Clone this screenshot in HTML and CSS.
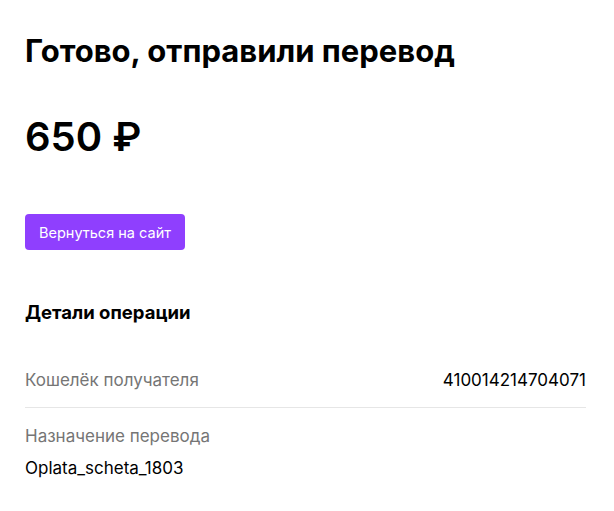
FILE: index.html
```html
<!DOCTYPE html>
<html lang="ru">
<head>
  <meta charset="UTF-8">
  <title>Перевод отправлен</title>
  <link rel="stylesheet" href="styles.css">
</head>
<body>

<div class="page">
  <h1 class="title">Готово, отправили перевод</h1>
  <div class="amount">650 ₽</div>

  <button class="back-btn">Вернуться на сайт</button>

  <h2 class="details-title">Детали операции</h2>

  <div class="row row-line">
    <span class="label">Кошелёк получателя</span>
    <span class="value">410014214704071</span>
  </div>
  <div class="row row-stack">
    <span class="label">Назначение перевода</span>
    <span class="value">Oplata_scheta_1803</span>
  </div>
</div>

</body>
</html>
```

FILE: styles.css
```css
body { margin: 0; font-family: Inter, "Noto Sans", sans-serif; color: #000; background: #fff; }
.page { padding: 31px 28px 20px 25px; }

.title { font-size: 31px; font-weight: 700; margin: 0; line-height: 40px; letter-spacing: 0; }
.amount { font-size: 40px; font-weight: 600; line-height: 48px; margin-top: 42px; }

.back-btn {
  display: block; margin-top: 53px;
  background: #8f3ffe; color: #fff; border: none; border-radius: 4px;
  width: 160px; height: 36px; font-family: inherit; font-size: 14.5px;
  cursor: pointer;
}

.details-title { font-size: 18.5px; font-weight: 700; margin: 50px 0 0; line-height: 24px; }

.row { font-size: 17px; line-height: 24px; }
.row-line {
  display: flex; justify-content: space-between; align-items: center;
  margin-top: 44px; padding-bottom: 15px; border-bottom: 1px solid #e6e6e6;
}
.row-stack { display: flex; flex-direction: column; gap: 8px; padding-top: 16px; }
.label { color: #757575; }
.value { color: #000; }
```
